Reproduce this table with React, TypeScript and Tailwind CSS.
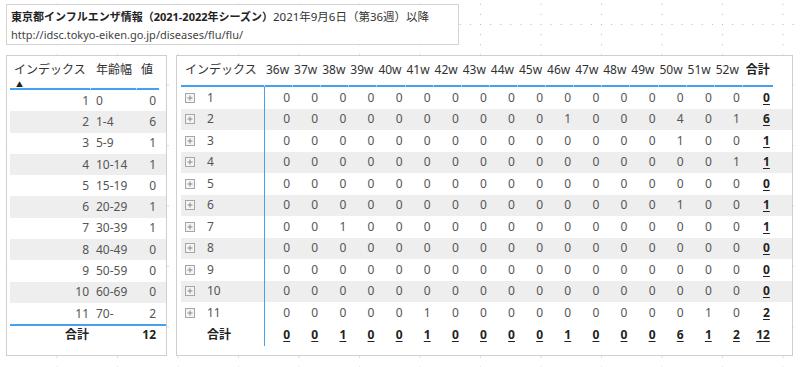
import React from "react";

const FONT = "font-['Noto_Sans','Noto_Sans_CJK_JP',sans-serif]";

const weeks = [36, 37, 38, 39, 40, 41, 42, 43, 44, 45, 46, 47, 48, 49, 50, 51, 52];

// index -> week -> count
const matrix: number[][] = [
  [0, 0, 0, 0, 0, 0, 0, 0, 0, 0, 0, 0, 0, 0, 0, 0, 0],
  [0, 0, 0, 0, 0, 0, 0, 0, 0, 0, 1, 0, 0, 0, 4, 0, 1],
  [0, 0, 0, 0, 0, 0, 0, 0, 0, 0, 0, 0, 0, 0, 1, 0, 0],
  [0, 0, 0, 0, 0, 0, 0, 0, 0, 0, 0, 0, 0, 0, 0, 0, 1],
  [0, 0, 0, 0, 0, 0, 0, 0, 0, 0, 0, 0, 0, 0, 0, 0, 0],
  [0, 0, 0, 0, 0, 0, 0, 0, 0, 0, 0, 0, 0, 0, 1, 0, 0],
  [0, 0, 1, 0, 0, 0, 0, 0, 0, 0, 0, 0, 0, 0, 0, 0, 0],
  [0, 0, 0, 0, 0, 0, 0, 0, 0, 0, 0, 0, 0, 0, 0, 0, 0],
  [0, 0, 0, 0, 0, 0, 0, 0, 0, 0, 0, 0, 0, 0, 0, 0, 0],
  [0, 0, 0, 0, 0, 0, 0, 0, 0, 0, 0, 0, 0, 0, 0, 0, 0],
  [0, 0, 0, 0, 0, 1, 0, 0, 0, 0, 0, 0, 0, 0, 0, 1, 0],
];

const ages = ["0", "1-4", "5-9", "10-14", "15-19", "20-29", "30-39", "40-49", "50-59", "60-69", "70-"];

const sum = (a: number[]) => a.reduce((s, v) => s + v, 0);

function GridBackdrop() {
  // the report canvas' dotted snap grid
  const dots = [0, 1, 2, 3, 4, 5];
  return (
    <svg className="absolute inset-0" width={800} height={367}>
      <defs>
        <pattern id="pbgrid" x={-4} y={24} width={60.5} height={60.5} patternUnits="userSpaceOnUse">
          {dots.map((j) => (
            <rect key={`v${j}`} x={0} y={j * 10.08} width={1} height={1} fill="#b4b4b4" />
          ))}
          {dots.map((i) => (
            <rect key={`h${i}`} x={i * 10.08} y={0} width={1} height={1} fill="#b4b4b4" />
          ))}
        </pattern>
      </defs>
      <rect width={800} height={367} fill="url(#pbgrid)" />
    </svg>
  );
}

function ExpandIcon() {
  return (
    <svg width={10} height={10} viewBox="0 0 10 10" className="shrink-0">
      <rect x={0.5} y={0.5} width={9} height={9} fill="#f4f4f4" stroke="#a6a6a6" />
      <path d="M2.5 5h5M5 2.5v5" stroke="#8a8a8a" strokeWidth={1} />
    </svg>
  );
}

function AgeTable() {
  return (
    <div className="w-[161px] h-[301px] border border-[#cfcfcf] bg-white pl-[3px]">
      <div className="grid grid-cols-[81px_46px_22px] h-[34px] text-[12px] text-[#333]">
        <div className="border-b-2 border-r border-b-[#45a0f2] border-r-white pl-[4px] pt-[6px] leading-[16px]">
          インデックス
          <div className="text-[7px] leading-none mt-[3px] pl-[2px] text-[#222]">▲</div>
        </div>
        <div className="border-b-2 border-r border-b-[#45a0f2] border-r-white pl-[5px] pt-[6px] leading-[16px]">年齢幅</div>
        <div className="border-b-2 border-b-[#45a0f2] pl-[4px] pt-[6px] leading-[16px]">値</div>
      </div>
      {ages.map((age, i) => (
        <div
          key={age}
          className={`grid grid-cols-[81px_46px_22px] h-[21.3px] items-center text-[12px] text-[#555] ${
            i % 2 === 1 ? "bg-[#eeeeee]" : ""
          }`}
        >
          <div className="text-right pr-[2px]">{i + 1}</div>
          <div className="pl-[5px]">{age}</div>
          <div className="text-right pr-[3px]">{sum(matrix[i])}</div>
        </div>
      ))}
      <div className="grid grid-cols-[81px_46px_22px] h-[20px] items-center text-[12px] font-bold text-[#222] border-t-2 border-[#45a0f2]">
        <div className="text-right pr-[2px]">合計</div>
        <div />
        <div className="text-right pr-[3px]">{sum(matrix.map(sum))}</div>
      </div>
    </div>
  );
}

const COLS = "grid-cols-[84px_repeat(17,28.12px)_30px]";

function WeekMatrix() {
  const colTotals = weeks.map((_, w) => sum(matrix.map((r) => r[w])));
  return (
    <div className="w-[617px] h-[301px] border border-[#cfcfcf] bg-white pl-[4px]">
      <div className={`grid ${COLS} h-[31px] text-[12px] text-[#333]`}>
        <div className="border-b-2 border-r border-b-[#45a0f2] border-r-white pl-[4px] pt-[6px] leading-[16px]">インデックス</div>
        {weeks.map((w) => (
          <div
            key={w}
            className="border-b-2 border-r border-b-[#45a0f2] border-r-white text-right pr-[3px] pt-[6px] leading-[16px]"
          >
            {w}w
          </div>
        ))}
        <div className="border-b-2 border-b-[#45a0f2] text-right pr-[3px] pt-[6px] leading-[16px] font-bold text-[#222]">合計</div>
      </div>
      {matrix.map((row, i) => (
        <div
          key={i}
          className={`grid ${COLS} h-[21.5px] text-[12px] text-[#555] ${i % 2 === 1 ? "bg-[#eeeeee]" : ""}`}
        >
          <div className="flex items-center gap-[12px] pl-[4px] border-r border-[#45a0f2]">
            <ExpandIcon />
            <span>{i + 1}</span>
          </div>
          {row.map((v, w) => (
            <div key={w} className="flex items-center justify-end pr-[3px]">
              {v}
            </div>
          ))}
          <div className="flex items-center justify-end pr-[3px] font-bold text-[#222] underline underline-offset-2">
            {sum(row)}
          </div>
        </div>
      ))}
      <div className={`grid ${COLS} h-[22px] text-[12px] font-bold text-[#222]`}>
        <div className="flex items-center pl-[26px] border-r border-[#45a0f2]">合計</div>
        {colTotals.map((v, w) => (
          <div key={w} className="flex items-center justify-end pr-[3px] underline underline-offset-2">
            {v}
          </div>
        ))}
        <div className="flex items-center justify-end pr-[3px] underline underline-offset-2">{sum(colTotals)}</div>
      </div>
    </div>
  );
}

export default function App() {
  return (
    <div className={`relative w-[800px] h-[367px] overflow-hidden bg-white ${FONT}`}>
      <GridBackdrop />
      <div className="relative pt-[4px] pl-[6px]">
        <div className="w-[453px] h-[41px] border border-[#d4d4d4] bg-white pl-[4px] pt-[3px] text-[11px] leading-[18px]">
          <div className="text-[#333] whitespace-nowrap">
            <span className="font-bold text-[#222]">東京都インフルエンザ情報（2021-2022年シーズン）</span>
            <span className="text-[11.5px]">2021年9月6日（第36週）以降</span>
          </div>
          <div className="text-[#444]">http://idsc.tokyo-eiken.go.jp/diseases/flu/flu/</div>
        </div>
        <div className="flex gap-[9px] mt-[10px]">
          <AgeTable />
          <WeekMatrix />
        </div>
      </div>
    </div>
  );
}
